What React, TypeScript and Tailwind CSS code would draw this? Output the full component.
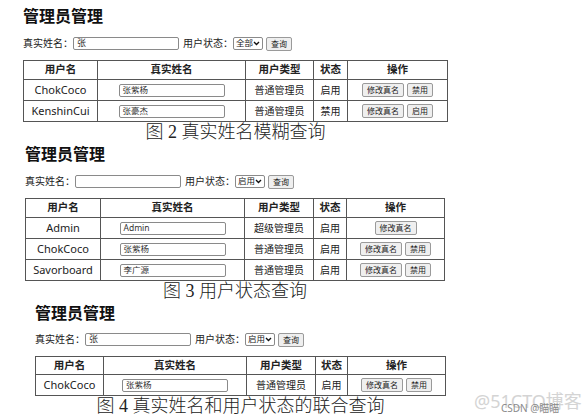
import React from 'react';

type UserRow = {
  username: string;
  realName: string;
  userType: string;
  status: string;
  actions: string[];
};

interface SectionProps {
  padLeft: string;
  titleMargin: string;
  searchMargin: string;
  tableMargin: string;
  headerHeight: string;
  colWidths: string[];
  query: string;
  status: string;
  caption: string;
  rows: UserRow[];
}

const uiFont = "font-['Noto_Sans','Noto_Sans_CJK_SC',sans-serif]";
const headers = ['用户名', '真实姓名', '用户类型', '状态', '操作'];

function SmallButton({ label, wide }: { label: string; wide?: boolean }) {
  return (
    <span
      className={`inline-flex h-[14px] items-center justify-center rounded-[2px] border border-[#9a9a9a] bg-[#efefef] text-[8px] leading-none text-[#222] ${
        wide ? 'w-[42px]' : 'w-[26px]'
      }`}
    >
      {label}
    </span>
  );
}

function Section({
  padLeft,
  titleMargin,
  searchMargin,
  tableMargin,
  headerHeight,
  colWidths,
  query,
  status,
  caption,
  rows,
}: SectionProps) {
  return (
    <section className={`${padLeft} ${titleMargin}`}>
      <h2 className="h-[20px] text-[16px] font-bold leading-[20px] text-[#111]">管理员管理</h2>

      {/* search bar */}
      <div className={`${searchMargin} flex h-[14px] items-center text-[10px] text-[#222]`}>
        <span>真实姓名：</span>
        <span className="flex h-[13px] w-[106px] items-center rounded-[2px] border border-[#8a8a8a] bg-white pl-[3px] text-[9px] text-[#333]">
          {query}
        </span>
        <span className="ml-[4px]">用户状态：</span>
        <span className="flex h-[13px] w-[30px] items-center justify-between rounded-[2px] border border-[#8a8a8a] bg-white px-[2px] text-[8.5px]">
          {status}
          <svg width="7" height="5" viewBox="0 0 7 5">
            <path d="M1 1l2.5 2.5L6 1" fill="none" stroke="#111" strokeWidth="1.4" />
          </svg>
        </span>
        <span className="ml-[3px]">
          <SmallButton label="查询" />
        </span>
      </div>

      <div className="flex w-fit flex-col">
        <table className={`${tableMargin} table-fixed border-collapse border border-[#555] text-[10.5px] text-[#222]`}>
          <colgroup>
            {colWidths.map((w, i) => (
              <col key={i} className={w} />
            ))}
          </colgroup>
          <thead>
            <tr className={headerHeight}>
              {headers.map(h => (
                <th key={h} className="border border-[#555] p-0 text-[10.5px] font-bold">
                  {h}
                </th>
              ))}
            </tr>
          </thead>
          <tbody>
            {rows.map(row => (
              <tr key={row.username} className="h-[21px]">
                <td className="border border-[#555] p-0 text-center text-[11px]">{row.username}</td>
                <td className="border border-[#555] p-0">
                  <div className="flex justify-center">
                    <span className="flex h-[13px] w-[106px] items-center rounded-[2px] border border-[#8a8a8a] bg-white pl-[3px] text-[8.5px] text-[#333]">
                      {row.realName}
                    </span>
                  </div>
                </td>
                <td className="border border-[#555] p-0 text-center text-[10px]">{row.userType}</td>
                <td className="border border-[#555] p-0 text-center text-[10px]">{row.status}</td>
                <td className="border border-[#555] p-0">
                  <div className="flex justify-center gap-[3px]">
                    {row.actions.map((a, i) => (
                      <SmallButton key={a} label={a} wide={i === 0} />
                    ))}
                  </div>
                </td>
              </tr>
            ))}
          </tbody>
        </table>
        <p className="h-[20px] whitespace-nowrap text-center font-['Liberation_Serif','Noto_Sans_CJK_SC',serif] text-[18px] font-light leading-[20px] text-[#222]">
          {caption}
        </p>
      </div>
    </section>
  );
}

export default function App() {
  return (
    <div className={`relative h-[418px] w-[583px] overflow-hidden bg-white pt-[6px] ${uiFont}`}>
      <Section
        padLeft="pl-[23px]"
        titleMargin="mt-0"
        searchMargin="mt-[10px]"
        tableMargin="mt-[10px]"
        headerHeight="h-[19px]"
        colWidths={['w-[74px]', 'w-[148px]', 'w-[68px]', 'w-[34px]', 'w-[100px]']}
        query="张"
        status="全部"
        caption="图 2  真实姓名模糊查询"
        rows={[
          { username: 'ChokCoco', realName: '张紫杨', userType: '普通管理员', status: '启用', actions: ['修改真名', '禁用'] },
          { username: 'KenshinCui', realName: '张豪杰', userType: '普通管理员', status: '禁用', actions: ['修改真名', '启用'] },
        ]}
      />
      <Section
        padLeft="pl-[25px]"
        titleMargin="mt-[2px]"
        searchMargin="mt-[10px]"
        tableMargin="mt-[10px]"
        headerHeight="h-[19px]"
        colWidths={['w-[75px]', 'w-[144px]', 'w-[69px]', 'w-[33px]', 'w-[98px]']}
        query=""
        status="启用"
        caption="图 3  用户状态查询"
        rows={[
          { username: 'Admin', realName: 'Admin', userType: '超级管理员', status: '启用', actions: ['修改真名'] },
          { username: 'ChokCoco', realName: '张紫杨', userType: '普通管理员', status: '启用', actions: ['修改真名', '禁用'] },
          { username: 'Savorboard', realName: '李广源', userType: '普通管理员', status: '启用', actions: ['修改真名', '禁用'] },
        ]}
      />
      <Section
        padLeft="pl-[35px]"
        titleMargin="mt-[2px]"
        searchMargin="mt-[9px]"
        tableMargin="mt-[10px]"
        headerHeight="h-[18px]"
        colWidths={['w-[68px]', 'w-[143px]', 'w-[69px]', 'w-[32px]', 'w-[98px]']}
        query="张"
        status="启用"
        caption="图 4  真实姓名和用户状态的联合查询"
        rows={[
          { username: 'ChokCoco', realName: '张紫杨', userType: '普通管理员', status: '启用', actions: ['修改真名', '禁用'] },
        ]}
      />

      {/* watermarks */}
      <span className="absolute left-[474px] top-[392px] text-[18px] leading-none text-[#d4d4d4]">@51CTO博客</span>
      <span className="absolute left-[501px] top-[403px] text-[10px] leading-none text-[#8a8a8a]">CSDN @瞄瞄</span>
    </div>
  );
}
